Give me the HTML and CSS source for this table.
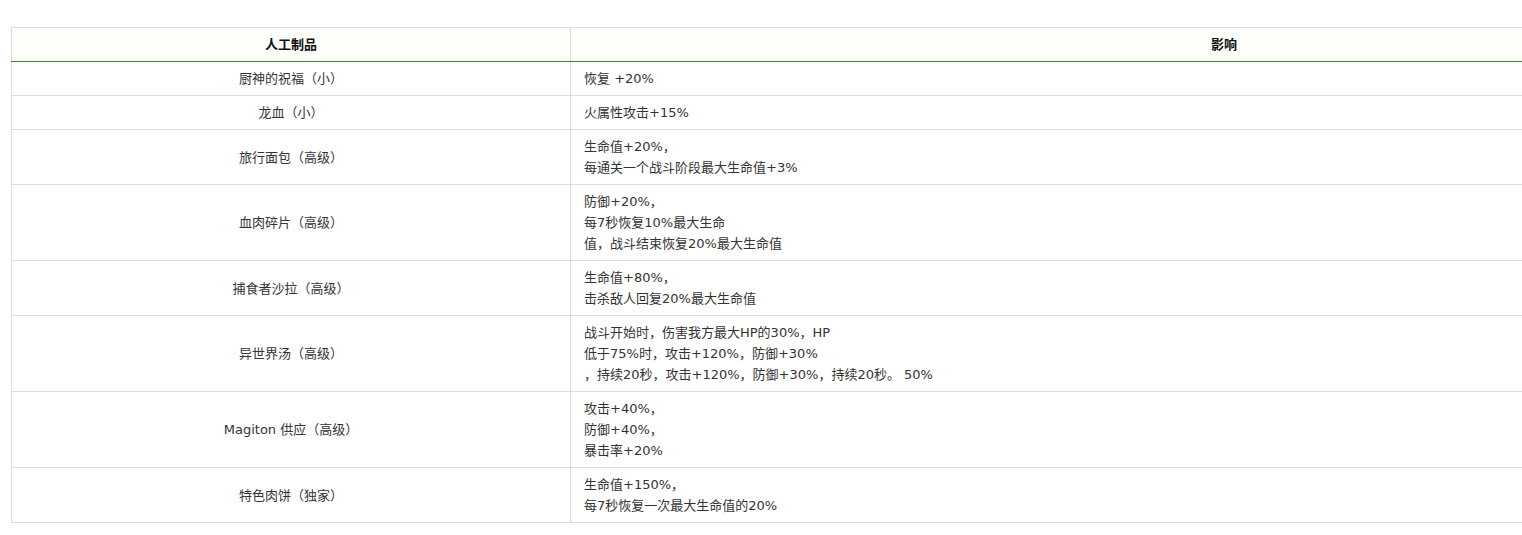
FILE: index.html
```html
<!DOCTYPE html>
<html lang="zh">
<head>
<meta charset="utf-8">
<link rel="stylesheet" href="styles.css">
</head>
<body>
<div class="page">
  <h3 class="title">人工制品效果一览</h3>
  <table class="grid">
    <thead>
      <tr><th class="c1">人工制品</th><th class="c2">影响</th></tr>
    </thead>
    <tbody>
      <tr><td class="c1">厨神的祝福（小）</td><td class="c2">恢复 +20%</td></tr>
      <tr><td class="c1">龙血（小）</td><td class="c2">火属性攻击+15%</td></tr>
      <tr><td class="c1">旅行面包（高级）</td><td class="c2">生命值+20%，<br>每通关一个战斗阶段最大生命值+3%</td></tr>
      <tr><td class="c1">血肉碎片（高级）</td><td class="c2">防御+20%，<br>每7秒恢复10%最大生命<br>值，战斗结束恢复20%最大生命值</td></tr>
      <tr><td class="c1">捕食者沙拉（高级）</td><td class="c2">生命值+80%，<br>击杀敌人回复20%最大生命值</td></tr>
      <tr><td class="c1">异世界汤（高级）</td><td class="c2">战斗开始时，伤害我方最大HP的30%，HP<br>低于75%时，攻击+120%，防御+30%<br>，持续20秒，攻击+120%，防御+30%，持续20秒。 50%</td></tr>
      <tr><td class="c1">Magiton 供应（高级）</td><td class="c2">攻击+40%，<br>防御+40%，<br>暴击率+20%</td></tr>
      <tr><td class="c1">特色肉饼（独家）</td><td class="c2">生命值+150%，<br>每7秒恢复一次最大生命值的20%</td></tr>
    </tbody>
  </table>
</div>
</body>
</html>
```

FILE: styles.css
```css
html, body {
  margin: 0;
  padding: 0;
  background: #ffffff;
  overflow: hidden;
}
.page {
  padding-left: 11px;
  font-family: "DejaVu Sans", "Noto Sans CJK SC", sans-serif;
  font-size: 13px;
  color: #333333;
}
.title {
  margin: -20px 0 0 24px;
  height: 24px;
  line-height: 24px;
  font-size: 16px;
  font-weight: bold;
  color: #222;
}
.grid {
  margin-top: 23px;
  border-collapse: collapse;
  width: 1560px;
  table-layout: fixed;
}
.grid th, .grid td {
  border: 1px solid #dcdcdc;
  line-height: 21px;
  padding: 6px 13px 6px 13px;
  vertical-align: middle;
}
.grid th {
  background: #fefefb;
  font-weight: bold;
  color: #111;
  text-align: center;
  border-bottom: 1px solid #2f8a34;
}
.grid .c1 {
  width: 532px;
  text-align: center;
}
.grid td.c2 {
  text-align: left;
}
.grid th.c2 {
  text-align: left;
  padding-left: 640px;
}
```
